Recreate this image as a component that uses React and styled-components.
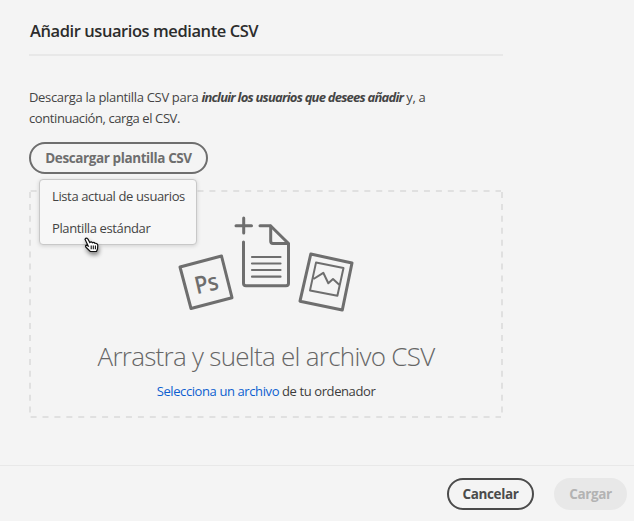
import React from "react";
import styled, { createGlobalStyle } from "styled-components";

const Global = createGlobalStyle`
  *, *::before, *::after { box-sizing: border-box; }
  body { margin: 0; background: #f4f4f4; font-family: "Open Sans", "Noto Sans", sans-serif; color: #4b4b4b; }
`;

const Page = styled.div`
  width: 634px;
  height: 521px;
  display: flex;
  flex-direction: column;
  background: #f4f4f4;
  overflow: hidden;
`;

const Content = styled.main`
  width: 503px;
  flex: 1;
  padding: 18px 0 0 29px;
  display: flex;
  flex-direction: column;
`;

const Title = styled.h1`
  margin: 0;
  height: 38px;
  padding-left: 1px;
  border-bottom: 2px solid #e8e8e8;
  font-size: 16.5px;
  font-weight: 600;
  letter-spacing: -0.43px;
  line-height: 26px;
  color: #2c2c2c;
  white-space: nowrap;
`;

const Intro = styled.p`
  margin: 31px 0 13px;
  font-size: 13px;
  letter-spacing: -0.32px;
  line-height: 21px;
  color: #444;
  white-space: nowrap;
`;

const Emphasis = styled.em`
  font-weight: 700;
  letter-spacing: -0.77px;
`;

const SecondLine = styled.span`
  letter-spacing: -0.41px;
`;

const Menu = styled.div`
  position: relative;
  height: 32px;
  z-index: 1;
`;

const Button = styled.button`
  width: ${(p) => p.$width}px;
  height: 32px;
  padding: 0;
  border: 2px solid ${(p) => p.$border};
  border-radius: 16px;
  background: ${(p) => p.$fill || "transparent"};
  color: ${(p) => p.$color};
  font: inherit;
  font-size: 13.5px;
  font-weight: 700;
  letter-spacing: -0.4px;
  line-height: 26px;
  white-space: nowrap;
`;

const Popover = styled.ul`
  position: absolute;
  left: 10px;
  top: 37px;
  width: 158px;
  height: 66px;
  margin: 0;
  padding: 0;
  list-style: none;
  border: 1px solid #c8c8c8;
  border-radius: 4px;
  background: #f7f7f7;
  box-shadow: 0 1px 4px rgba(0, 0, 0, 0.15);
`;

const Option = styled.li`
  height: 32px;
  padding-left: 12px;
  font-size: 13px;
  letter-spacing: -0.38px;
  line-height: 32px;
  color: #444;
  white-space: nowrap;
`;

const Pointer = styled.svg`
  position: absolute;
  left: 55px;
  top: 95px;
  overflow: visible;
  filter: drop-shadow(1px 3px 2px rgba(0, 0, 0, 0.45));
`;

const DropZone = styled.section`
  position: relative;
  height: 228px;
  margin-top: 16px;
  padding-top: 25px;
  display: flex;
  flex-direction: column;
  align-items: center;
`;

const Outline = styled.svg`
  position: absolute;
  inset: 0;
`;

const ArtText = styled.text`
  font-family: "Open Sans", sans-serif;
  font-size: 24px;
  font-weight: 600;
  letter-spacing: -0.3px;
  fill: #6e6e6e;
  stroke: none;
`;

const Prompt = styled.h2`
  margin: 24px 0 0;
  font-size: 26px;
  font-weight: 300;
  letter-spacing: -0.73px;
  line-height: 38px;
  color: #666;
  white-space: nowrap;
`;

const Hint = styled.p`
  margin: 6px 0 0;
  font-size: 13px;
  letter-spacing: -0.4px;
  line-height: 20px;
  color: #3c3c3c;
  white-space: nowrap;
`;

const Link = styled.a`
  color: #0d5fd0;
`;

const Footer = styled.footer`
  height: 56px;
  border-top: 1px solid #e8e8e8;
  padding: 12px 7px 0 0;
  display: flex;
  justify-content: flex-end;
  gap: 20px;
`;

function Artwork() {
  return (
    <svg width="178" height="98" viewBox="177 215 178 98" fill="none" stroke="#6e6e6e" strokeLinejoin="round">
      <path d="M180 267L221.5 256L232 297.7L191 308.5Z" strokeWidth="3" />
      <ArtText transform="translate(196.8 294.3) rotate(-13) scale(0.9 1)">Ps</ArtText>
      <g strokeWidth="3" strokeLinecap="round">
        <path d="M243.7 218V233M236 225.7H251.5" />
        <path d="M260 225.7H270.5L288.5 243.5V283.3Q288.5 285.7 286 285.7H246Q243.5 285.7 243.5 283.3V242" />
        <path d="M270.7 226V241.3Q270.7 243.5 273 243.5H288" />
      </g>
      <path d="M252 257H280.5M252 263.5H280.5M252 270H280.5M252 276.7H280.5" strokeWidth="2.2" strokeLinecap="round" />
      <path d="M310.8 254L352 263L342.3 310L300 301.2Z" strokeWidth="3" />
      <path d="M316 262.6L343.5 268L337.4 295.7L310 290.4Z M313.5 279L323.3 272.8L328.3 283.3L333 279L339.5 285" strokeWidth="2" />
    </svg>
  );
}

export default function App() {
  return (
    <>
      <Global />
      <Page>
        <Content>
          <Title>Añadir usuarios mediante CSV</Title>
          <Intro>
            Descarga la plantilla CSV para <Emphasis>incluir los usuarios que desees añadir</Emphasis> y, a<br />
            <SecondLine>continuación, carga el CSV.</SecondLine>
          </Intro>
          <Menu>
            <Button $width={179} $border="#6e6e6e" $color="#6e6e6e">Descargar plantilla CSV</Button>
            <Popover>
              <Option>Lista actual de usuarios</Option>
              <Option>Plantilla estándar</Option>
            </Popover>
            <Pointer width="16" height="17" viewBox="0 0 16 17">
              <path d="M1 2.2Q2.2 0 4 2.2L5.8 5.5Q7.2 4.2 8.5 5.8Q10 4.8 11 6.3Q13.5 6 13.8 8.5L13.5 12L12.5 14.5H6.3L2 10.3Q0.8 8.6 2.5 8.2L4.2 9Z" fill="#fff" stroke="#111" strokeWidth="1.2" />
              <path d="M7.2 8.5V12.2M9.3 8.5V12.2M11.4 8.5V12.2" stroke="#111" strokeWidth="1.1" />
            </Pointer>
          </Menu>
          <DropZone>
            <Outline width="474" height="228">
              <path d="M1.6 1H472M1.6 227H472M1 2V226M473 2V226" stroke="#e0e0e0" strokeWidth="2" strokeDasharray="6 5.92" />
            </Outline>
            <Artwork />
            <Prompt>Arrastra y suelta el archivo CSV</Prompt>
            <Hint><Link>Selecciona un archivo</Link> de tu ordenador</Hint>
          </DropZone>
        </Content>
        <Footer>
          <Button $width={87} $border="#4b4b4b" $color="#4b4b4b">Cancelar</Button>
          <Button $width={73} $border="#e8e8e8" $fill="#e8e8e8" $color="#b3b3b3">Cargar</Button>
        </Footer>
      </Page>
    </>
  );
}
